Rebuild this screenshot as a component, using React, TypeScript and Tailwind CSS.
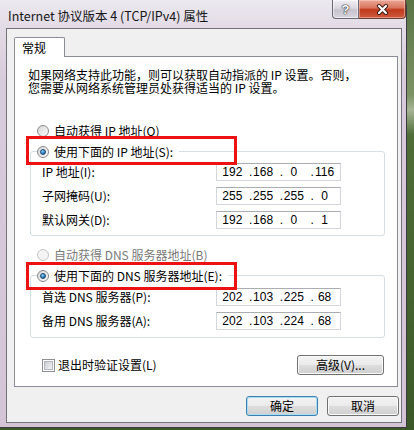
import type { ReactNode } from "react";

function Radio({ checked, disabled }: { checked?: boolean; disabled?: boolean }) {
  return (
    <span
      className={`flex h-[12px] w-[12px] shrink-0 items-center justify-center rounded-full border ${
        disabled
          ? "border-[#c4c4c4] bg-[#f4f4f4]"
          : "border-[#8a8a8a] bg-[linear-gradient(135deg,#d6d6d6,#fbfbfb)]"
      }`}
    >
      {checked && (
        <span className="h-[6px] w-[6px] rounded-full border border-[#1b4a72] bg-[radial-gradient(circle_at_35%_30%,#9ad8ff,#2a7bbf_60%,#17507f)]" />
      )}
    </span>
  );
}

function IpField({ parts }: { parts: string[] }) {
  return (
    <div className="flex h-[18px] w-[125px] items-center border border-[#d3d6db] border-t-[#abadb3] bg-white font-['Liberation_Sans',sans-serif] text-[12px] leading-[16px]">
      {parts.map((p, i) => (
        <div key={i} className="flex flex-1 items-center">
          <span className={`w-[6px] text-center ${i === 0 ? "invisible" : ""}`}>.</span>
          <span className="-ml-[6px] flex-1 text-center">{p}</span>
        </div>
      ))}
    </div>
  );
}

function Row({ label, parts }: { label: string; parts: string[] }) {
  return (
    <div className="flex items-center pl-[11px]">
      <span className="w-[174px] leading-[16px]">{label}</span>
      <IpField parts={parts} />
    </div>
  );
}

function Group({ title, children, className }: { title: string; children: ReactNode; className: string }) {
  return (
    <div className={`ml-[15px] mr-[12px] rounded-[3px] border border-[#d5dfe5] ${className}`}>
      <div className="-mt-[7px] ml-[6px] flex h-[14px] items-center">
        <span className="flex items-center gap-[5px] bg-white pr-[6px] leading-[14px]">
          <Radio checked />
          {title}
        </span>
      </div>
      {children}
    </div>
  );
}

const btn =
  "flex h-[20px] items-center justify-center rounded-[3px] border bg-[linear-gradient(#f3f3f3_0%,#ebebeb_48%,#dddddd_52%,#cfcfcf_100%)] leading-[16px]";

export default function App() {
  return (
    <div className="h-[430px] w-[414px] overflow-hidden bg-[linear-gradient(180deg,#5a7444_0px,#7c9366_95px,#a7b596_110px,#4f6d37_135px,#3b5828_100%)] font-['Noto_Sans_CJK_SC','Noto_Sans',sans-serif] text-[12px] text-black">
      <div className="flex h-[428px] w-[407px] flex-col rounded-tr-[6px] border-b border-r border-[#3e3a42] bg-[linear-gradient(180deg,#ece9f0_0px,#e2dbe5_28px,#d8cbdb_80px,#d3c4d6_100%)]">
        {/* title bar */}
        <div className="flex h-[28px] items-start justify-between">
          <span className="pl-[8px] pt-[7px] text-[12.5px] leading-[17px] text-[#151515]">
            Internet 协议版本 4 (TCP/IPv4) 属性
          </span>
          <div className="flex">
            <div className="flex h-[19px] w-[27px] items-center justify-center rounded-bl-[4px] border border-t-0 border-[#6b6871] bg-[linear-gradient(#f1eff4_0%,#dcd8e1_45%,#c7c2cd_55%,#d9d5de_100%)] font-['Liberation_Sans',sans-serif] text-[13px] font-bold leading-none text-white shadow-[inset_0_0_0_1px_rgba(255,255,255,0.55)] [text-shadow:0_0_1px_#303030,0_0_1px_#303030,0_0_2px_#505050]">
              ?
            </div>
            <div className="flex h-[19px] w-[47px] items-center justify-center rounded-br-[4px] border border-l-0 border-t-0 border-[#6e3b33] bg-[linear-gradient(#eaa897_0%,#d9765f_42%,#c0391c_55%,#d05a3c_100%)] shadow-[inset_0_0_0_1px_rgba(255,220,210,0.45)]">
              <svg width="13" height="11" viewBox="0 0 13 11">
                <path d="M3 2 L10 9 M10 2 L3 9" stroke="#3a1a14" strokeWidth="4" strokeLinecap="round" />
                <path d="M3 2 L10 9 M10 2 L3 9" stroke="#ffffff" strokeWidth="2.2" strokeLinecap="round" />
              </svg>
            </div>
          </div>
        </div>

        {/* client */}
        <div className="ml-[6px] flex h-[395px] w-[396px] flex-col border border-[#76727a] bg-[#f0f0f0]">
          <div className="relative z-10 -mb-px ml-[7px] mt-[8px] flex h-[20px] w-[51px] items-center rounded-t-[2px] border border-b-0 border-[#898c95] bg-white pl-[7px] leading-[14px]">
            常规
          </div>
          <div className="relative ml-[7px] flex h-[331px] w-[384px] flex-col border border-[#898c95] bg-white">
            <p className="mt-[11px] pl-[13px] leading-[13px]">
              <span className="block">如果网络支持此功能，则可以获取自动指派的 IP 设置。否则，</span>
              <span className="block">您需要从网络系统管理员处获得适当的 IP 设置。</span>
            </p>

            <div className="mt-[30px] flex h-[14px] items-center gap-[5px] pl-[22px] leading-[14px]">
              <Radio />
              自动获得 IP 地址(O)
            </div>

            <Group title="使用下面的 IP 地址(S):" className="mt-[13px] pb-[6px]">
              <div className="mt-[4px] flex flex-col gap-[6px]">
                <Row label="IP 地址(I):" parts={["192", "168", "0", "116"]} />
                <Row label="子网掩码(U):" parts={["255", "255", "255", "0"]} />
                <Row label="默认网关(D):" parts={["192", "168", "0", "1"]} />
              </div>
            </Group>

            <div className="mt-[12px] flex h-[14px] items-center gap-[5px] pl-[22px] leading-[14px] text-[#7a7a7a]">
              <Radio disabled />
              自动获得 DNS 服务器地址(B)
            </div>

            <Group title="使用下面的 DNS 服务器地址(E):" className="mt-[13px] pb-[7px]">
              <div className="mt-[5px] flex flex-col gap-[6px]">
                <Row label="首选 DNS 服务器(P):" parts={["202", "103", "225", "68"]} />
                <Row label="备用 DNS 服务器(A):" parts={["202", "103", "224", "68"]} />
              </div>
            </Group>

            <div className="mt-[17px] flex items-center justify-between pl-[27px] pr-[13px]">
              <div className="flex items-center gap-[3px] leading-[14px]">
                <span className="flex h-[13px] w-[13px] items-center justify-center border border-[#8e8f8f] bg-white">
                  <span className="h-[9px] w-[9px] border border-[#b4b8be] bg-[linear-gradient(135deg,#c9cdd3,#f4f4f4)]" />
                </span>
                退出时验证设置(L)
              </div>
              <div className={`${btn} h-[19px] w-[87px] border-[#707070] shadow-[inset_0_0_0_1px_#fbfbfb]`}>
                高级(V)...
              </div>
            </div>

            {/* red annotation boxes */}
            <div className="absolute left-[11px] top-[79px] h-[29px] w-[211px] border-[3px] border-[#ee1111]" />
            <div className="absolute left-[11px] top-[205px] h-[28px] w-[211px] border-[3px] border-[#ee1111]" />
          </div>

          <div className="mt-[9px] flex justify-end gap-[9px] pr-[2px]">
            <div className={`${btn} w-[72px] border-[#3c7fb1] shadow-[inset_0_0_0_1px_#a9dcf5]`}>确定</div>
            <div className={`${btn} w-[72px] border-[#707070] shadow-[inset_0_0_0_1px_#fbfbfb]`}>取消</div>
          </div>
        </div>
      </div>
    </div>
  );
}
